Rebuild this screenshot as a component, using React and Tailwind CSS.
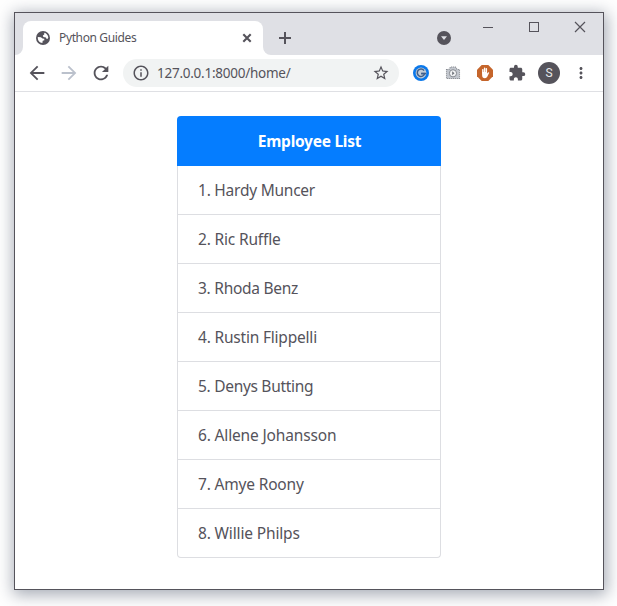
import {
  MdArrowBack,
  MdArrowForward,
  MdRefresh,
  MdInfoOutline,
  MdStarBorder,
  MdExtension,
  MdMoreVert,
} from "react-icons/md";

const employees = [
  { name: "Hardy Muncer", tracking: "tracking-[-0.24px]" },
  { name: "Ric Ruffle", tracking: "tracking-[-0.17px]" },
  { name: "Rhoda Benz", tracking: "tracking-[-0.27px]" },
  { name: "Rustin Flippelli", tracking: "tracking-[-0.2px]" },
  { name: "Denys Butting", tracking: "tracking-[-0.3px]" },
  { name: "Allene Johansson", tracking: "tracking-[-0.16px]" },
  { name: "Amye Roony", tracking: "tracking-[-0.18px]" },
  { name: "Willie Philps", tracking: "tracking-[-0.15px]" },
];

function Cell({ children }) {
  return <div className="flex w-8 shrink-0 items-center justify-center">{children}</div>;
}

function TabStrip() {
  return (
    <div className="flex h-[42px] shrink-0 items-end bg-[#dfe0e5]">
      <svg className="h-2 w-2 shrink-0" viewBox="0 0 8 8">
        <path d="M8 0v8H0a8 8 0 0 0 8-8z" fill="#fff" />
      </svg>
      <div className="flex h-[34px] w-60 items-center rounded-t-lg bg-white pr-2.5 pl-[13px]">
        <svg className="size-[14px]" viewBox="0 0 14 14">
          <circle cx="7" cy="7" r="7" fill="#55535b" />
          <path d="M1.8 6.1l3.1.1 1.6 1.3 1.7.2.2 1.6-1.7.4-.3 2.3C3.6 12 1.6 9.6 1.8 6.1z" fill="#fff" />
          <path d="M8.2 1.8c2.2.5 3.9 2.4 4.1 4.7-.4 1.3-1 1.6-1.6 1.6L9.9 6.4 7.4 6.1 6.8 4.5l1.5-.9z" fill="#fff" />
        </svg>
        <span className="ml-[9px] text-[12px] tracking-[-0.37px] whitespace-nowrap text-[#55535b]">Python Guides</span>
        <svg className="ml-auto size-3" viewBox="0 0 12 12">
          <path d="M2.3 2.3l7.4 7.4M9.7 2.3l-7.4 7.4" stroke="#55535b" strokeWidth="2.1" />
        </svg>
      </div>
      <svg className="h-2 w-2 shrink-0" viewBox="0 0 8 8">
        <path d="M0 0v8h8a8 8 0 0 1-8-8z" fill="#fff" />
      </svg>
      <div className="flex h-[34px] w-7 items-center justify-center">
        <svg className="size-3" viewBox="0 0 12 12">
          <path d="M6 0v12M0 6h12" stroke="#55535b" strokeWidth="2" />
        </svg>
      </div>
      <div className="ml-auto flex h-[34px] items-center pr-[22px]">
        <svg className="size-[14px]" viewBox="0 0 14 14">
          <circle cx="7" cy="7" r="7" fill="#55535b" />
          <path d="M4 5.2h6L7 9z" fill="#dfe0e5" />
        </svg>
      </div>
      <div className="flex h-full w-[130px] items-start">
        <div className="flex h-7 w-[30px] items-center justify-center">
          <svg className="h-3 w-3" viewBox="0 0 12 12">
            <path d="M1 6.5h10" stroke="#55535b" />
          </svg>
        </div>
        <div className="flex h-7 flex-1 items-center justify-center pr-2">
          <svg className="h-3 w-3" viewBox="0 0 12 12">
            <rect x="1.5" y="1.5" width="9" height="9" fill="none" stroke="#55535b" />
          </svg>
        </div>
        <div className="mr-[16px] flex h-7 w-[14px] items-center justify-center">
          <svg className="h-3 w-3" viewBox="0 0 12 12">
            <path d="M1 1l10 10M11 1L1 11" stroke="#55535b" strokeWidth="1.2" />
          </svg>
        </div>
      </div>
    </div>
  );
}

function Toolbar() {
  return (
    <div className="flex h-[37px] shrink-0 items-center border-b border-[#dfe0e4] px-1.5 text-[#55535b]">
      <Cell><MdArrowBack className="size-[22px]" /></Cell>
      <Cell><MdArrowForward className="size-[22px] text-[#bbc1cc]" /></Cell>
      <Cell><MdRefresh className="size-[22px]" /></Cell>
      <div className="mx-1.5 flex h-7 flex-1 items-center rounded-full bg-[#f1f3f3] px-[9px]">
        <MdInfoOutline className="size-[18px]" />
        <span className="ml-[7px] text-[13.5px] tracking-[-0.25px] whitespace-nowrap">127.0.0.1:8000/home/</span>
        <MdStarBorder className="ml-auto size-[18px]" />
      </div>
      <Cell>
        <svg className="size-4" viewBox="0 0 16 16">
          <circle cx="8" cy="8" r="8" fill="#0b78ea" />
          <circle cx="8" cy="8" r="5.4" fill="#c3ccd6" />
          <path d="M11 5.6A3.7 3.7 0 1 0 11.6 8.6H8.2" fill="none" stroke="#3f5f8c" strokeWidth="1.5" />
          <path d="M8.2 8.6h5" stroke="#3f5f8c" strokeWidth="1.5" />
        </svg>
      </Cell>
      <Cell>
        <svg className="size-4" viewBox="0 0 16 16">
          <path d="M1.5 4.5H4L5.5 2h5L12 4.5h2.5v9h-13z" fill="#c3c7ce" stroke="#858990" strokeWidth="1.1" strokeDasharray="1.2 .8" />
          <circle cx="8" cy="8.3" r="3.6" fill="#f2f3f4" stroke="#858990" strokeWidth="1" />
          <path d="M7.2 6.3v4l2.3-2z" fill="#6c7078" />
        </svg>
      </Cell>
      <Cell>
        <svg className="size-4" viewBox="0 0 16 16">
          <path d="M4.7 0h6.6L16 4.7v6.6L11.3 16H4.7L0 11.3V4.7z" fill="#c5652b" />
          <path d="M5.8 8V4.6M7.6 7.5V3.2M9.4 7.5V3.8" stroke="#fff" strokeWidth="1.4" strokeLinecap="round" />
          <path d="M5.1 7h5v1.5l1.1-1c.6-.5 1.2 0 .9.6l-1.5 2.9c-.6 1.4-1.3 2.2-2.7 2.2-1.8 0-2.8-1.2-2.8-3z" fill="#fff" />
        </svg>
      </Cell>
      <Cell><MdExtension className="size-[18px]" /></Cell>
      <Cell>
        <div className="flex size-[22px] items-center justify-center rounded-full bg-[#55535b] font-['Roboto',sans-serif] text-[12px] text-[#e8e8ea]">S</div>
      </Cell>
      <Cell><MdMoreVert className="size-[18px]" /></Cell>
    </div>
  );
}

function EmployeeCard() {
  return (
    <div className="w-[264px]">
      <div className="flex h-[50px] items-center justify-center rounded-t-[4px] bg-[#057dff] pt-px pl-px text-[15.5px] font-bold tracking-[-0.27px] text-white">
        Employee List
      </div>
      <ol className="rounded-b-[4px] border border-t-0 border-[#dddee2] text-[15.5px] text-[#55535b]">
        {employees.map((e, i) => (
          <li key={e.name} className="flex h-[49px] items-center border-b border-[#dddee2] px-5 pt-px whitespace-nowrap last:h-12 last:border-b-0">
            <span className={e.tracking}>{i + 1}. {e.name}</span>
          </li>
        ))}
      </ol>
    </div>
  );
}

export default function App() {
  return (
    <div className="h-[606px] w-[617px] overflow-hidden bg-white pt-3 pl-3.5 font-['Noto_Sans',sans-serif]">
      <div className="flex h-[578px] w-[590px] flex-col border border-[#55535b] bg-white shadow-[1px_3px_15px_2px_rgba(80,90,110,0.5)]">
        <TabStrip />
        <Toolbar />
        <div className="flex flex-1 items-start justify-center pt-6">
          <EmployeeCard />
        </div>
      </div>
    </div>
  );
}
